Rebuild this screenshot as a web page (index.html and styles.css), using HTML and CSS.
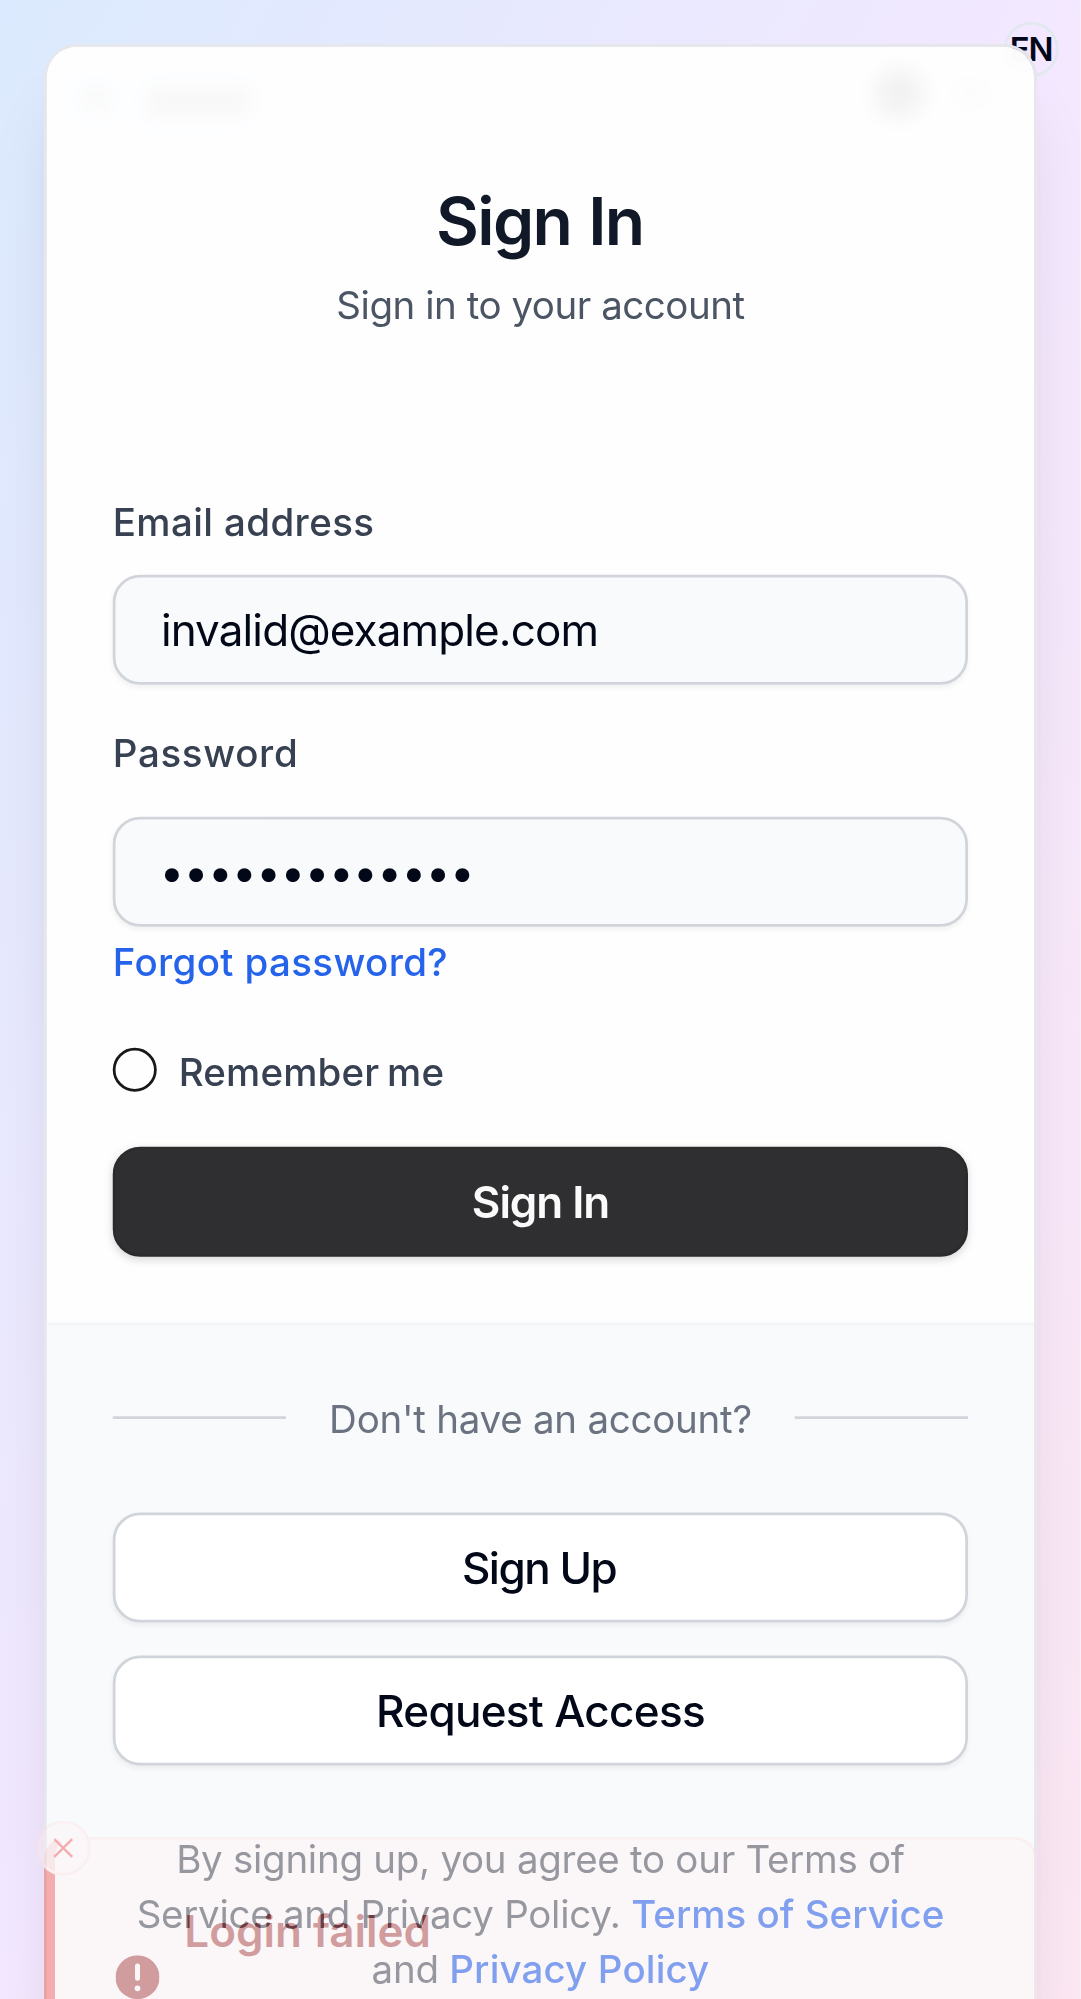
FILE: index.html
```html
<!DOCTYPE html>
<html lang="en">
<head>
<meta charset="utf-8">
<title>Sign In</title>
<link rel="stylesheet" href="styles.css">
</head>
<body>
<div class="page">
  <div class="topbar" aria-hidden="true">
    <span class="topbar-back"></span>
    <span class="topbar-name"></span>
    <span class="topbar-avatar"></span>
    <span class="topbar-menu"></span>
  </div>
  <div class="lang">EN</div>

  <main class="card">
    <header class="card-header">
      <h1 class="title">Sign In</h1>
      <p class="subtitle">Sign in to your account</p>
    </header>

    <form class="form">
      <label class="label" for="email">Email address</label>
      <input class="input" id="email" type="text" value="invalid@example.com">
      <label class="label label-password" for="password">Password</label>
      <input class="input input-password" id="password" type="password" value="wrongpassword">
      <a class="link forgot">Forgot password?</a>
      <label class="remember"><span class="check"></span><span class="remember-text">Remember me</span></label>
      <button class="button button-primary" type="button">Sign In</button>
    </form>

    <footer class="card-footer">
      <div class="divider"><span class="line"></span><span class="divider-text">Don't have an account?</span><span class="line"></span></div>
      <div class="actions">
        <button class="button button-outline button-signup" type="button">Sign Up</button>
        <button class="button button-outline" type="button">Request Access</button>
      </div>
      <p class="terms">By signing up, you agree to our Terms of Service and Privacy Policy. <a class="link">Terms of Service</a> and <a class="link link-privacy">Privacy Policy</a></p>
    </footer>
  </main>

  <div class="toast" role="alert">
    <span class="toast-close">
      <svg class="close-icon" viewBox="0 0 24 24" fill="none" stroke="currentColor" stroke-width="1.700"><path d="M18.500 5.500l-13 13M5.500 5.500l13 13"/></svg>
    </span>
    <svg class="alert-icon" viewBox="0 0 44 44"><path fill="currentColor" fill-rule="evenodd" d="M22 0a22 22 0 1 0 0 44a22 22 0 1 0 0-44zM22 8.200a2.500 2.500 0 0 1 2.500 2.500v12.300a2.500 2.500 0 0 1-5 0V10.700a2.500 2.500 0 0 1 2.500-2.500zM22 30.200a2.900 2.900 0 1 1 0 5.800a2.900 2.900 0 1 1 0-5.800z"/></svg>
    <span class="toast-title">Login failed</span>
  </div>
</div>
</body>
</html>
```
FILE: styles.css
```css
* { box-sizing: border-box; }

body {
  margin: 0;
  height: 1999px;
  font-family: Inter, "Liberation Sans", sans-serif;
  color: #020817;
}

/* A 393px-wide phone layout, drawn at 2.75x */
.page {
  position: relative;
  width: 393.1px;
  height: 727px;
  overflow: hidden;
  padding: 16px;
  background: linear-gradient(to bottom right, #dbeafe, #f3e8ff, #fce7f3);
  transform: scale(2.75);
  transform-origin: 0 0;
}

/* App bar that sits behind the frosted card */
.topbar {
  position: absolute;
  top: 24px;
  left: 30px;
  width: 333px;
  height: 20px;
  display: flex;
  align-items: center;
}
.topbar-back { width: 10px; height: 10px; margin-top: 4px; border-radius: 5px; background: rgba(0, 0, 0, .5); }
.topbar-name { width: 38px; height: 10px; margin: 5px auto 0 13px; border-radius: 3px; background: rgba(0, 0, 0, .6); }
.topbar-avatar { width: 18px; height: 18px; border-radius: 9px; background: #000; }
.topbar-menu { width: 16px; height: 10px; margin: 0 2px 0 9px; border-radius: 5px; background: rgba(0, 0, 0, .2); }

.lang {
  position: absolute;
  top: 8px;
  right: 8px;
  width: 20px;
  height: 20px;
  display: flex;
  align-items: center;
  justify-content: center;
  border: 1px solid #e2e8f0;
  border-radius: 50%;
  font-size: 12px;
  line-height: 17px;
  padding: 0 .4px 1px 0;
  font-weight: 600;
  letter-spacing: -.5px;
}

.card {
  position: relative;
  height: 734px;
  overflow: hidden;
  border: 1px solid #e5e7eb;
  border-radius: 12px;
  background: rgba(255, 255, 255, .95);
  background-clip: padding-box;
  backdrop-filter: blur(4px);
  box-shadow: 0 20px 25px -5px rgba(0, 0, 0, .1), 0 8px 10px -6px rgba(0, 0, 0, .1);
}

.card-header {
  padding: 48px 24px 0;
  text-align: center;
}
.title {
  margin: 0;
  padding-right: .5px;
  font-size: 24px;
  line-height: 32px;
  font-weight: 600;
  letter-spacing: -.6px;
  word-spacing: .7px;
  color: #111827;
}
.subtitle {
  margin: 4px 0 0;
  font-size: 14px;
  line-height: 20px;
  letter-spacing: -.17px;
  color: #4b5563;
}

.form {
  display: flex;
  flex-direction: column;
  padding: 62px 24px 24px;
}
.label {
  font-size: 14px;
  line-height: 14px;
  font-weight: 500;
  letter-spacing: .14px;
  color: #374151;
}
.label-password { margin-top: 18px; letter-spacing: .24px; }
.input {
  height: 40px;
  margin-top: 12px;
  padding: 0 16.500px;
  border: 1px solid #d1d5db;
  border-radius: 10px;
  background: #f9fafc;
  color: #020817;
  font: 400 16px Inter, "Liberation Sans", sans-serif;
  letter-spacing: -.32px;
  box-shadow: 0 1px 2px rgba(0, 0, 0, .05);
}
.input-password { margin-top: 16px; padding: 0 16px; letter-spacing: -.2px; }
.link { color: #2563eb; font-weight: 500; letter-spacing: 0; }
.link-privacy { letter-spacing: .05px; }
.forgot {
  margin-top: 3px;
  font-size: 14px;
  line-height: 20px;
  letter-spacing: .13px;
}
.remember {
  display: flex;
  gap: 8px;
  height: 16px;
  margin-top: 21px;
}
.check {
  width: 16px;
  height: 16px;
  border: 1px solid #18181b;
  border-radius: 50%;
}
.remember-text {
  margin-top: 2px;
  font-size: 14px;
  line-height: 14px;
  font-weight: 500;
  letter-spacing: .06px;
  word-spacing: -1px;
  color: #374151;
}

.button {
  height: 40px;
  width: 100%;
  padding: 0;
  border-radius: 10px;
  font: 500 16px Inter, "Liberation Sans", sans-serif;
  letter-spacing: -.25px;
  box-shadow: 0 1px 2px rgba(0, 0, 0, .05);
}
.button-primary {
  margin-top: 20px;
  border: 1px solid #2b2b2d;
  background: #2f2f31;
  color: #fafafa;
  font-weight: 600;
  letter-spacing: -.39px;
  box-shadow: 0 1px 3px rgba(0, 0, 0, .15);
}
.button-outline {
  border: 1px solid #d1d5db;
  background: #fff;
  color: #020817;
}
.button-signup { padding-right: 1px; letter-spacing: -.54px; }

.card-footer {
  height: 300px;
  padding: 24px;
  border-top: 1px solid #f3f4f6;
  background: #f9fafc;
}
.divider {
  display: flex;
  height: 20px;
}
.line { flex: 1; height: 1px; margin-top: 9px; background: #d1d5db; }
.divider-text {
  padding: 0 16px;
  font-size: 14px;
  line-height: 20px;
  letter-spacing: -.09px;
  color: #6b7280;
}
.actions {
  display: flex;
  flex-direction: column;
  gap: 12px;
  margin-top: 24px;
}
.terms {
  margin: 24px 0 0;
  text-align: center;
  font-size: 14px;
  line-height: 20px;
  letter-spacing: -.1px;
  color: #4b5563;
}

/* Toast fading in over the bottom of the card */
.toast {
  position: absolute;
  left: 16px;
  top: 668.400px;
  width: 361px;
  height: 90px;
  border: 1px solid #fee2e2;
  border-left: 4px solid #ef4444;
  border-radius: 8px;
  background: #fef2f2;
  color: #991b1b;
  opacity: .42;
}
.toast-close {
  position: absolute;
  left: -7px;
  top: -7.400px;
  width: 20px;
  height: 20px;
  display: flex;
  align-items: center;
  justify-content: center;
  border: 1px solid #fee2e2;
  border-radius: 50%;
  background: rgba(254, 242, 242, .8);
  color: #ef4444;
}
.close-icon { width: 12px; height: 12px; }
.alert-icon { position: absolute; left: 22px; top: 41.600px; width: 16px; height: 16px; }
.toast-title {
  position: absolute;
  left: 47px;
  top: 20.400px;
  font-size: 16px;
  line-height: 24px;
  font-weight: 600;
}
```
